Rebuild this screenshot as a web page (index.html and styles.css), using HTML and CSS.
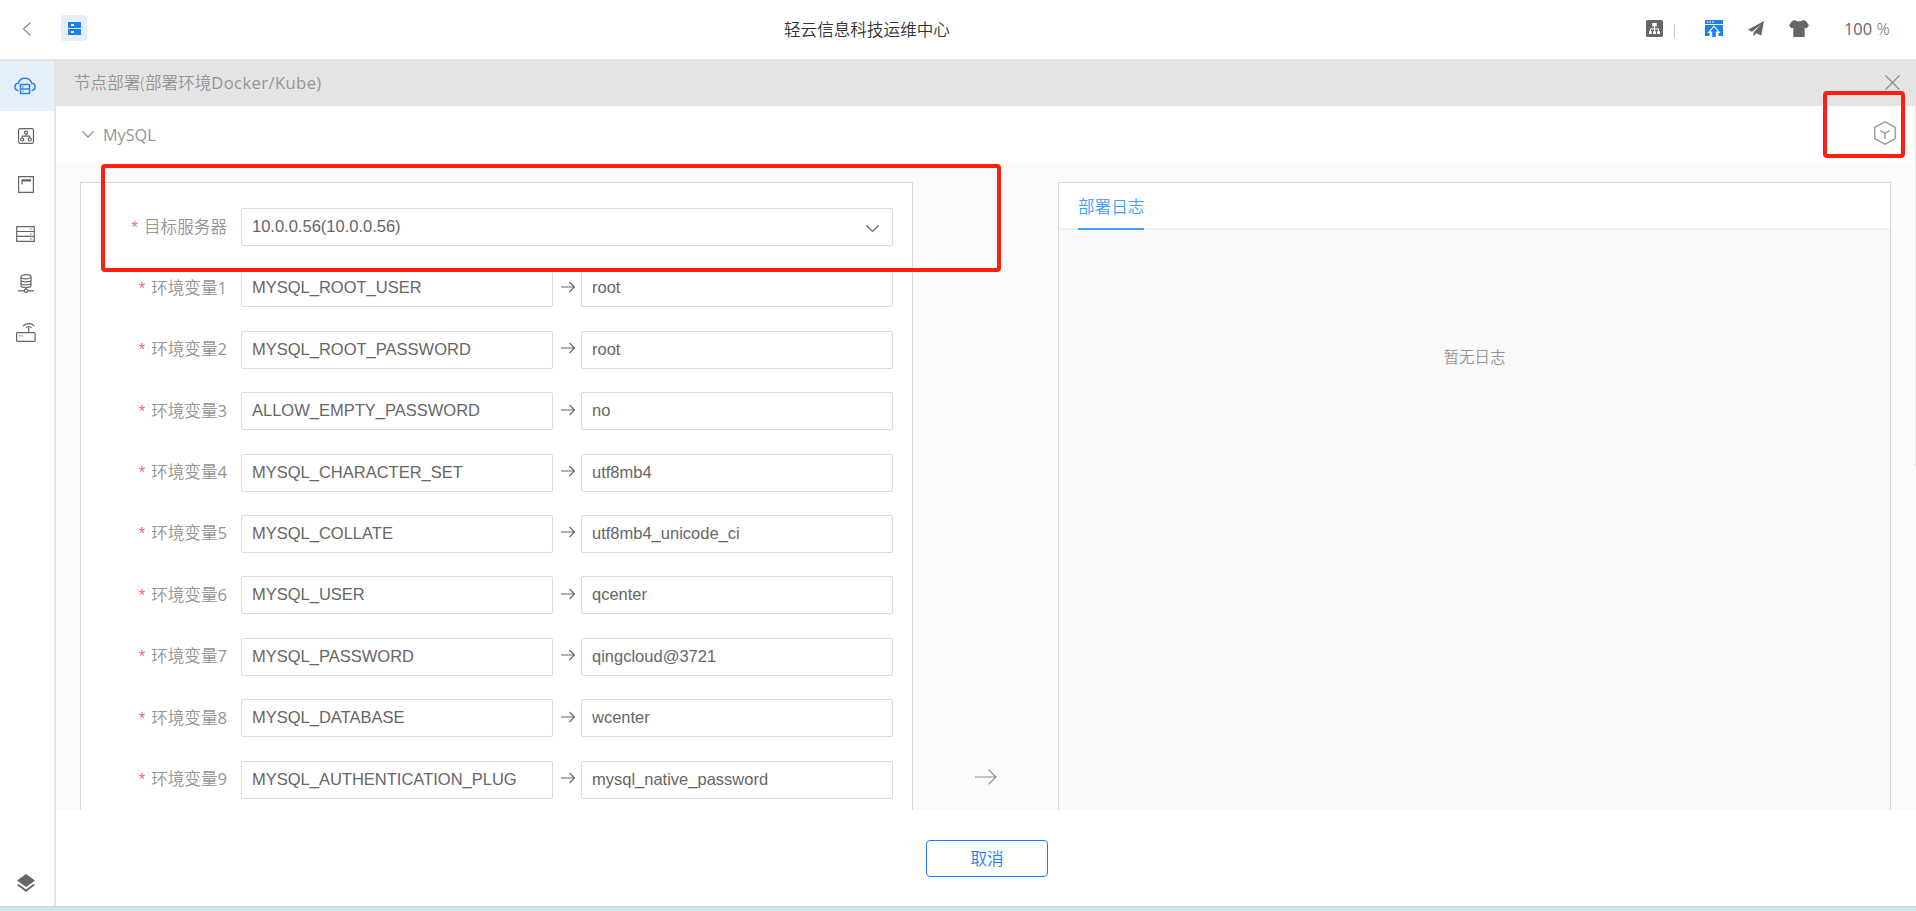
FILE: index.html
```
<!DOCTYPE html>
<html lang="zh-CN">
<head>
    <meta charset="UTF-8">
    <title>轻云信息科技运维中心</title>
    <link rel="stylesheet" href="styles.css">
</head>
<body>
    <header class="header">
        <div class="header-left">
            <svg class="back" width="10" height="16" viewBox="0 0 10 16"><path d="M8.5 1.5L1.5 8l7 6.5"/></svg>
            <span class="app-icon">
                <svg width="13" height="13" viewBox="0 0 13 13"><path fill="#1e80f0" d="M0 0h13v6H0zM0 7h13v6H0z"/><path fill="#fff" d="M3 2h3v2H3zM3 9h3v2H3z"/></svg>
            </span>
        </div>
        <div class="header-title">轻云信息科技运维中心</div>
        <div class="header-right">
            <svg class="icon-tree" width="17" height="17" viewBox="0 0 17 17"><rect width="17" height="17" rx="1.5" fill="#666"/><path fill="#fff" d="M6.3 3h4.4v3.4H6.3zM3 11.3h2.8V14H3zM7.1 11.3h2.8V14H7.1zM11.2 11.3H14V14h-2.8z"/><path fill="none" class="wire" d="M8.5 6v6M4.5 12V8.9h8V12"/></svg>
            <span class="split"></span>
            <svg class="icon-upload" width="18" height="17" viewBox="0 0 18 17"><path fill="#1e80f0" d="M0 0h18v4H0zM0 5h18v11h-4.500v-3h2.200L9 5.400 2.300 13h2.200v3H0z"/><path fill="#1e80f0" d="M9 7l4 4.600h-2.200V17H7.200v-5.400H5z"/><path fill="#fff" d="M2 1.500h1.400v1.200H2zM4.600 1.500H6v1.200H4.600zM7.200 1.500h1.400v1.200H7.200z"/></svg>
            <svg class="icon-plane" width="16" height="16" viewBox="0 0 16 16"><path fill="#666" d="M16 0L0 8.800l4 2L13 3.500 5.500 11.600V15.500l2.600-3.200L13.300 14.500z"/></svg>
            <svg class="icon-shirt" width="20" height="17" viewBox="0 0 20 17"><path fill="#666" d="M6 0C7 1.700 13 1.700 14 0l3 1 3 4.600-2.600 2.900-1.700-1V17H4.300V7.500l-1.700 1L0 5.600 3 1z"/></svg>
            <span class="zoom-value">100 <i>%</i></span>
        </div>
    </header>

    <div class="main">
        <nav class="sidebar">
            <a class="nav-item active">
                <svg width="22" height="18" viewBox="0 0 22 18"><path d="M4.500 13.700C-.5 13 0 6.600 4.300 6.300 6-.6 16-.6 17.700 6.300 22 6.600 22.500 13 17.500 13.700"/><path d="M6.500 7.500h9v9h-9zM6.500 12h9M8.500 9.800h1M8.500 14.300h1"/></svg>
            </a>
            <a class="nav-item">
                <svg width="16" height="16" viewBox="0 0 16 16"><rect x=".6" y=".6" width="14.800" height="14.800" rx="1.500"/><circle cx="8" cy="4.600" r="1.500"/><circle cx="4.200" cy="11.500" r="1.500"/><circle cx="11.800" cy="11.500" r="1.500"/><path d="M8 6.100v2M4.200 10V8.200h7.600V10"/></svg>
            </a>
            <a class="nav-item">
                <svg width="16" height="17" viewBox="0 0 16 17"><path d="M.6.600h14.800v15.800H.6zM3.500 3.800h9v1H4V8.500"/></svg>
            </a>
            <a class="nav-item">
                <svg width="19" height="16" viewBox="0 0 19 16"><path d="M.7.600h17.600v4.900H.7zM.7 5.500h17.600v4.900H.7zM.7 10.400h17.600v4.900H.7zM14 3h1.500M14 8h1.500M14 12.900h1.500"/></svg>
            </a>
            <a class="nav-item">
                <svg width="16" height="19" viewBox="0 0 16 19"><ellipse cx="8" cy="2.800" rx="5" ry="2.100"/><path d="M3 3v8.500c0 2.700 10 2.700 10 0V3M3 6c0 2.400 10 2.400 10 0M3 9c0 2.400 10 2.400 10 0M8 13.500V15M0 16.800h6.300M9.700 16.800H16"/><circle cx="8" cy="16.800" r="1.600"/></svg>
            </a>
            <a class="nav-item">
                <svg width="20" height="19" viewBox="0 0 20 19"><rect x=".6" y="9.600" width="18.500" height="8.800" rx="1"/><path d="M12.700 9.500V4.300M9.800 5c1.500-2 4.300-2 5.800 0M7 3.200c3-3.500 8.400-3.500 11.400 0M3 12.800h1.200M5.600 12.800h1.200"/></svg>
            </a>
            <a class="nav-item nav-bottom">
                <svg width="18" height="18" viewBox="0 0 18 18"><path class="solid" d="M9 0l9 6.500L9 13 0 6.500zM0 11l1.500-1L9 15.500l7.500-5.500 1.500 1-9 7z"/></svg>
            </a>
        </nav>

        <div class="content">
            <div class="title-bar">
                <div class="title">节点部署(部署环境<span class="en">Docker/Kube)</span></div>
                <svg class="close" width="15" height="15" viewBox="0 0 15 15"><path d="M.5.500l14 14M14.500.500l-14 14"/></svg>
            </div>
            <div class="section-head">
                <svg width="12" height="7" viewBox="0 0 12 7"><path d="M.5.500L6 6 11.500.500"/></svg>
                <span class="section-name">MySQL</span>
                <svg class="cube" width="22" height="24" viewBox="0 0 22 24"><path d="M11 .8l10.200 5.600v11.200L11 23.200.8 17.600V6.400zM6.200 9.500l4.800 2.800 4.800-2.800M11 12.300V18"/></svg>
                <div class="mark mark-deploy"></div>
            </div>
            <div class="deploy">
                <div class="panel form-panel">
                    <div class="form-row">
                        <label>目标服务器</label>
                        <div class="field select">10.0.0.56(10.0.0.56)
                            <svg width="13" height="8" viewBox="0 0 13 8"><path d="M.5.500l6 6 6-6"/></svg>
                        </div>
                    </div>
                    <div id="envList" class="env-list"></div>
                </div>
                <div class="between">
                    <svg width="22" height="16" viewBox="0 0 22 16"><path d="M0 8h21M13.500.600L21 8l-7.500 7.400"/></svg>
                </div>
                <div class="panel log-panel">
                    <div class="tabs"><span class="tab">部署日志</span></div>
                    <div class="log-empty">暂无日志</div>
                </div>
                <div class="mark mark-server"></div>
            </div>
            <div class="footer">
                <button type="button" class="cancel">取消</button>
            </div>
            <div class="scroll-thumb"></div>
        </div>
    </div>
    <div class="bottom-strip"></div>
    <script src="script.js"></script>
</body>
</html>
```
FILE: styles.css
```
* {
    box-sizing: border-box;
}

body {
    margin: 0;
    height: 100vh;
    display: flex;
    flex-direction: column;
    overflow: hidden;
    font-family: "Open Sans", "Noto Sans CJK SC", sans-serif;
    font-weight: 350;
    font-size: 16.6px;
    color: #949494;
    background-color: #fff;
}

svg {
    display: block;
    flex: none;
    fill: none;
    stroke: #8c8c8c;
    stroke-width: 1.2;
}

/* header */
.header {
    display: flex;
    justify-content: space-between;
    height: 61px;
    flex: none;
    border-bottom: 2px solid #e4e4e4;
}

.header-left {
    width: 784px;
    display: flex;
    padding: 15px 0 0 22px;
}

.back {
    margin-top: 6px;
}

.app-icon {
    display: flex;
    justify-content: center;
    align-items: center;
    width: 26px;
    height: 26px;
    margin-left: 29px;
    border-radius: 2px;
    background-color: #e6f0fd;
}

.app-icon svg,
.header-right svg {
    stroke: none;
}

.header-right .wire {
    stroke: #fff;
    stroke-width: 1;
}

.header-title {
    line-height: 59px;
    color: #333;
}

.header-right {
    flex: 1;
    display: flex;
    justify-content: flex-end;
    align-items: center;
    padding: 0 26px 2px 0;
}

.split {
    width: 1px;
    height: 14px;
    margin: 5px 30px 0 11px;
    background-color: #ccc;
}

.icon-upload {
    margin-right: 25px;
}

.icon-plane {
    margin-right: 25px;
}

.zoom-value {
    width: 46px;
    margin-left: 35px;
    white-space: nowrap;
    font-size: 16.4px;
    font-weight: 400;
    color: #666;
}

.zoom-value i {
    font-style: normal;
    font-weight: 300;
}

/* sidebar */
.main {
    display: flex;
    flex: 1;
    min-height: 0;
}

.sidebar {
    display: flex;
    flex-direction: column;
    width: 56px;
    flex: none;
    border-right: 2px solid #e4e4e4;
}

.nav-item {
    display: flex;
    justify-content: center;
    align-items: center;
    width: 51px;
    height: 49.2px;
}

.nav-item svg {
    stroke: #666;
}

.nav-item.active {
    width: 54px;
    height: 50px;
    padding-right: 4px;
    background-color: #e6f0fb;
}

.nav-item.active svg {
    stroke: #2d7ff5;
    stroke-width: 1.5;
}

.nav-bottom {
    margin-top: auto;
    margin-bottom: -2px;
}

.nav-bottom .solid {
    fill: #666;
    stroke: none;
}

/* content */
.content {
    position: relative;
    flex: 1;
    min-width: 0;
    display: flex;
    flex-direction: column;
}

.title-bar {
    display: flex;
    justify-content: space-between;
    align-items: center;
    height: 45px;
    padding: 0 16px 2px 18px;
    background-color: #e4e4e4;
}

.title {
    margin-top: -2px;
}

.en {
    font-weight: 400;
}

.title .en {
    letter-spacing: 0.4px;
}

.section-head {
    position: relative;
    display: flex;
    align-items: center;
    height: 57px;
    padding: 0 20px 0 26px;
}

.section-name {
    margin-left: 9px;
    font-size: 16.2px;
    font-weight: 400;
}

.cube {
    margin: -3px 0 0 auto;
}

.deploy {
    position: relative;
    display: flex;
    height: 647px;
    padding: 19px 25px 0 24px;
    background-color: #fbfbfb;
}

.panel {
    width: 833px;
    flex: none;
    border: 1px solid #d9d9d9;
    border-bottom: none;
}

.form-panel {
    padding: 25px 19px 0 0;
    background-color: #fff;
}

.form-row {
    display: flex;
    align-items: center;
    height: 38px;
    margin-bottom: 23.4px;
}

.form-row label {
    width: 146px;
    margin: -3px 14px 0 0;
    text-align: right;
    white-space: nowrap;
}

.form-row label::before {
    content: "*";
    margin-right: 6px;
    font-family: "Liberation Sans", Arial, sans-serif;
    font-weight: 400;
    color: #f56c6c;
}

.field {
    flex: 1;
    height: 38px;
    min-width: 0;
    padding: 0 10px;
    border: 1px solid #dcdcdc;
    border-radius: 2px;
    background-color: #fff;
    font-family: "Liberation Sans", Arial, sans-serif;
    font-size: 16.5px;
    font-weight: 400;
    line-height: 34px;
    color: #666;
}

.select {
    display: flex;
    justify-content: space-between;
    padding-right: 13px;
}

.select svg {
    margin-top: 16px;
}

.select svg,
.arrow {
    stroke: #666;
}

.arrow {
    margin: -3px 6px 0 8px;
}

.between {
    flex: 1;
    display: flex;
    justify-content: center;
    align-items: center;
    padding-top: 562px;
}

.log-panel {
    background-color: #fafafa;
}

.tabs {
    height: 47px;
    padding-left: 19px;
    border-bottom: 2px solid #f2f2f2;
    background-color: #fff;
}

.tab {
    display: inline-block;
    height: 47px;
    border-bottom: 2px solid #409eff;
    line-height: 48px;
    color: #409eff;
}

.log-empty {
    margin-top: 117px;
    text-align: center;
    font-size: 15.4px;
    line-height: 22px;
}

.footer {
    display: flex;
    justify-content: center;
    padding-top: 30px;
    padding-left: 2px;
}

.cancel {
    width: 122px;
    height: 37px;
    padding: 0 0 2px;
    border: 1px solid #1e80f0;
    border-radius: 4px;
    background-color: #fff;
    font: inherit;
    color: #1e80f0;
}

.scroll-thumb {
    position: absolute;
    right: 0;
    top: 45px;
    width: 1px;
    height: 360px;
    background-color: #e8e8e8;
}

/* red highlight boxes over the form and the deploy icon */
.mark {
    position: absolute;
    border: 4px solid #ff1f10;
    border-radius: 4px;
}

.mark-server {
    left: 45px;
    top: 1px;
    width: 900px;
    height: 108px;
}

.mark-deploy {
    right: 11px;
    top: -15px;
    width: 82px;
    height: 67px;
}

.bottom-strip {
    height: 5px;
    flex: none;
    border-top: 1px solid #bcd6dc;
    background-color: #cde7ee;
}
```
FILE: script.js
```
var envs = [
    ["MYSQL_ROOT_USER", "root"],
    ["MYSQL_ROOT_PASSWORD", "root"],
    ["ALLOW_EMPTY_PASSWORD", "no"],
    ["MYSQL_CHARACTER_SET", "utf8mb4"],
    ["MYSQL_COLLATE", "utf8mb4_unicode_ci"],
    ["MYSQL_USER", "qcenter"],
    ["MYSQL_PASSWORD", "qingcloud@3721"],
    ["MYSQL_DATABASE", "wcenter"],
    ["MYSQL_AUTHENTICATION_PLUG", "mysql_native_password"]
];

var html = "";
for (var i = 0; i < envs.length; i++) {
    html += `
        <div class="form-row">
            <label>环境变量<span class="en">${i + 1}</span></label>
            <div class="field">${envs[i][0]}</div>
            <svg class="arrow" width="14" height="12" viewBox="0 0 14 12"><path d="M0 6h13.500M8.500 1l5 5-5 5"/></svg>
            <div class="field">${envs[i][1]}</div>
        </div>`;
}
document.getElementById("envList").innerHTML = html;
```
